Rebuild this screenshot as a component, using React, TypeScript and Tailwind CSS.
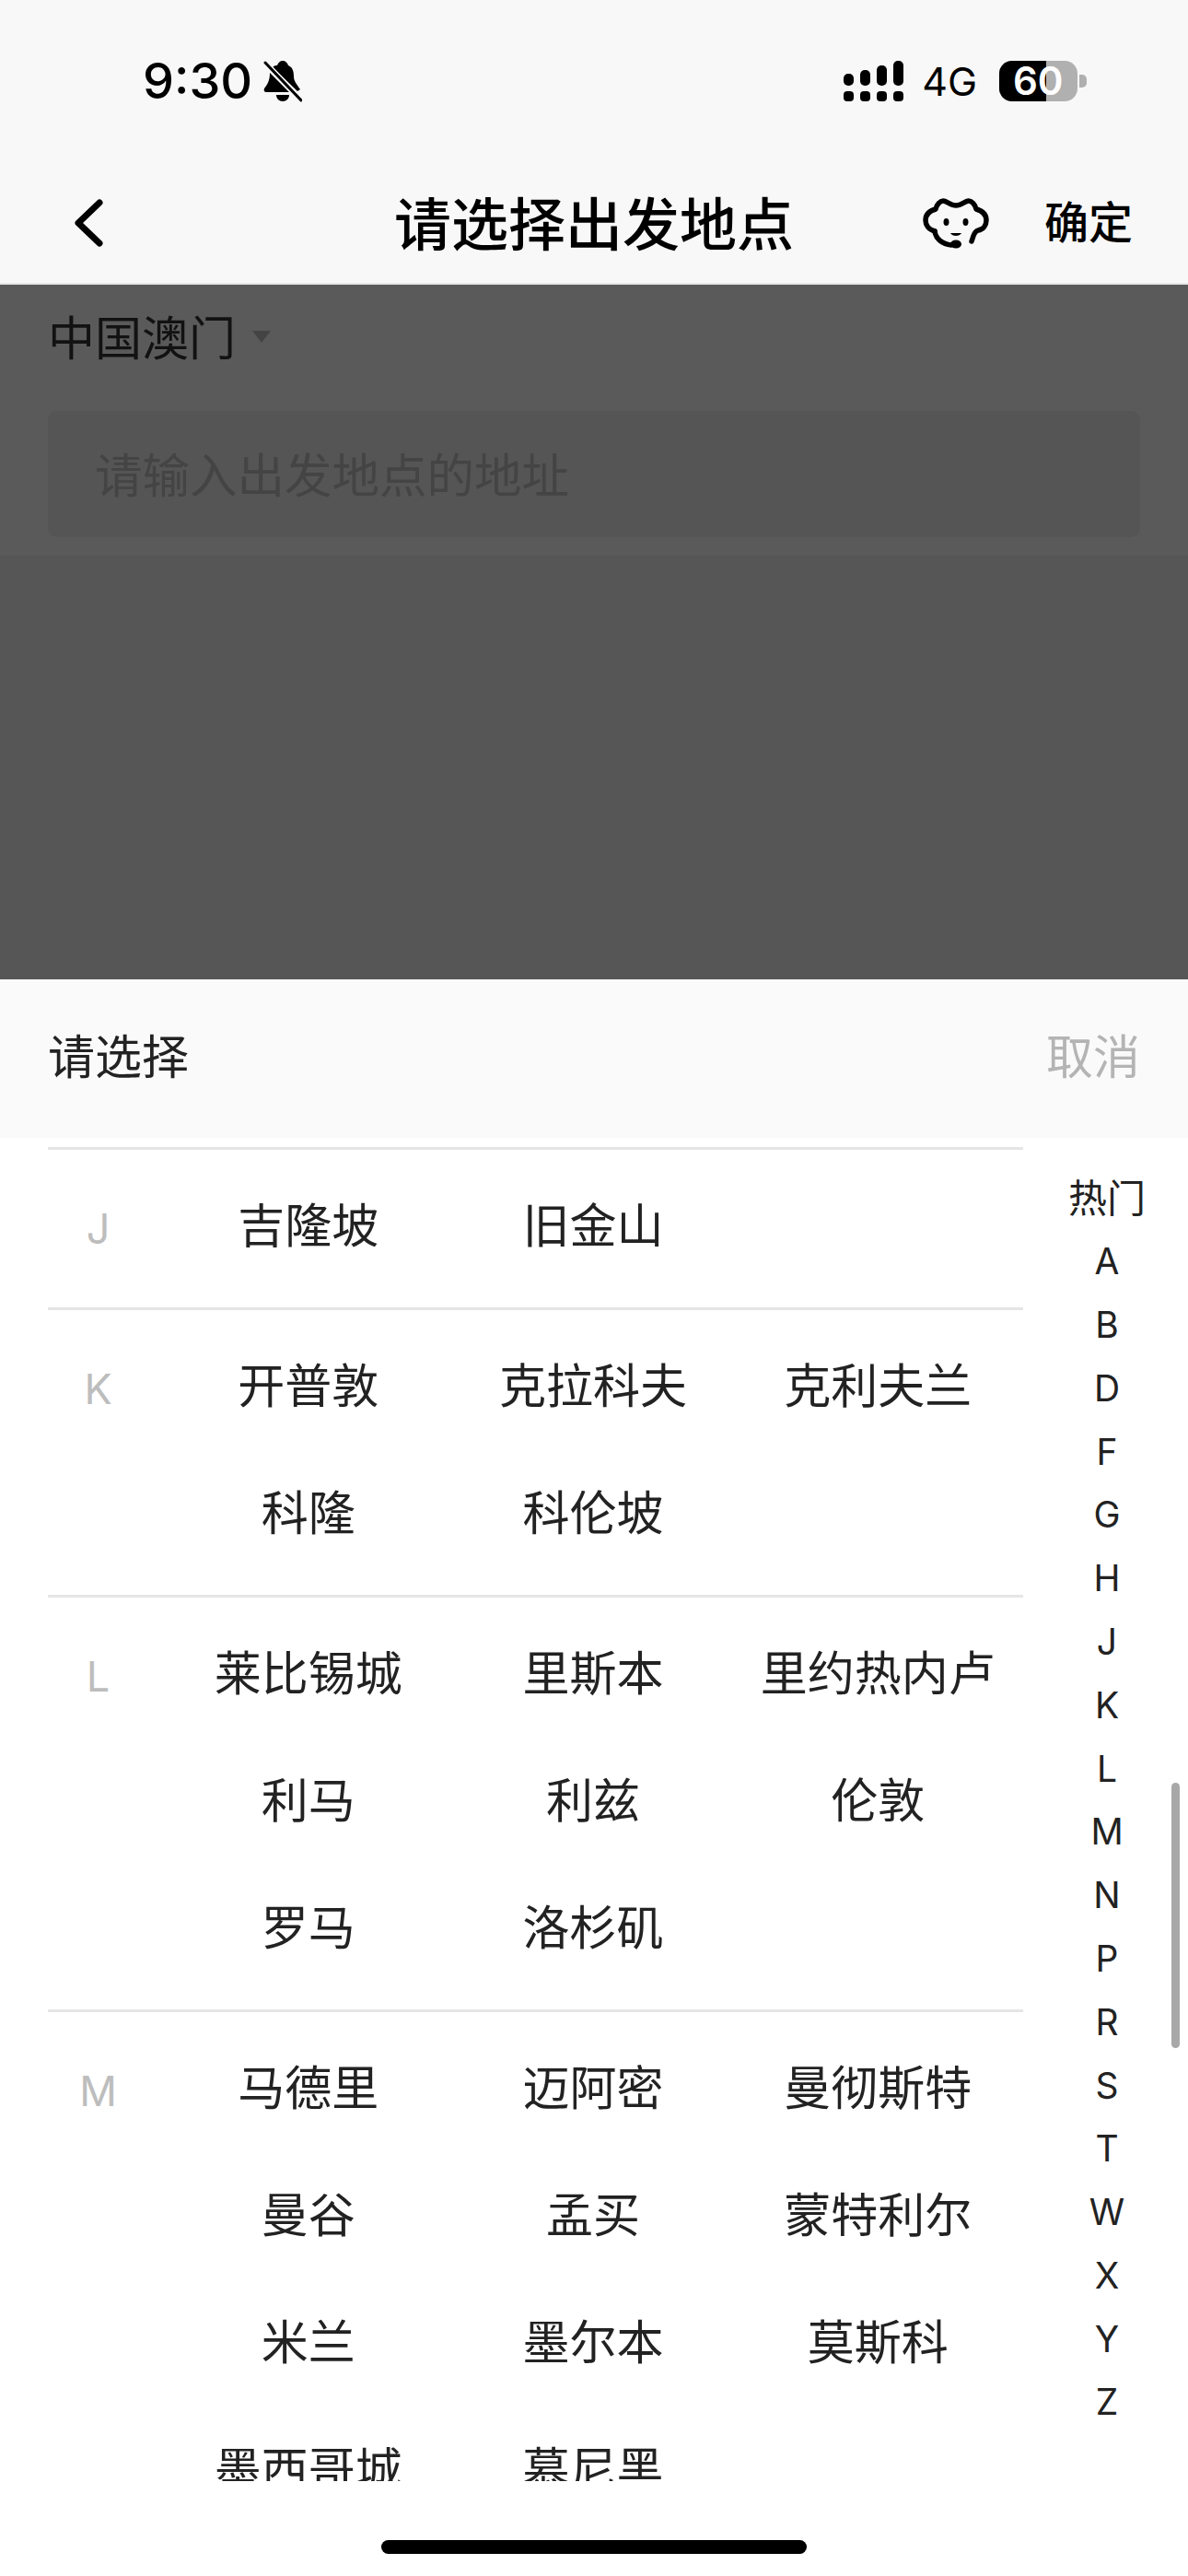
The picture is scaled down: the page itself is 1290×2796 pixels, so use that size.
const cjk = { fontFamily: '"Noto Sans CJK SC", "Noto Sans", sans-serif' };
const latin = { fontFamily: 'Inter, "Noto Sans CJK SC", sans-serif' };

const sections: { letter: string; rows: string[][] }[] = [
  { letter: "J", rows: [["吉隆坡", "旧金山", ""]] },
  { letter: "K", rows: [["开普敦", "克拉科夫", "克利夫兰"], ["科隆", "科伦坡", ""]] },
  { letter: "L", rows: [["莱比锡城", "里斯本", "里约热内卢"], ["利马", "利兹", "伦敦"], ["罗马", "洛杉矶", ""]] },
  { letter: "M", rows: [["马德里", "迈阿密", "曼彻斯特"], ["曼谷", "孟买", "蒙特利尔"], ["米兰", "墨尔本", "莫斯科"], ["墨西哥城", "慕尼黑", ""]] },
];
const index = ["A", "B", "D", "F", "G", "H", "J", "K", "L", "M", "N", "P", "R", "S", "T", "W", "X", "Y", "Z"];

function Bell() {
  return (
    <svg width="42" height="46" viewBox="0 0 42 46" className="ml-[12px]">
      <path d="M21 1c3 0 5 2 6 5 5 2 6 7 6 12 0 5 3 8 7 14l-3 2L10 8c2-2 4-2 5-2 1-3 3-5 6-5Z" fill="#000" />
      <path d="M7 14l21 21H3c-2 0-3-2-2-4 3-4 6-8 6-17Z" fill="#000" />
      <path d="M14 38h14c0 4-3 7-7 7s-7-3-7-7Z" fill="#000" />
      <path d="M2 3l39 41" stroke="#f8f8f8" strokeWidth="6" fill="none" />
      <path d="M2 3l39 41" stroke="#000" strokeWidth="3" strokeLinecap="round" fill="none" />
    </svg>
  );
}

function Signal() {
  const tops = ["h-[13px]", "h-[17px]", "h-[22px]", "h-[27px]"];
  return (
    <div className="flex gap-[7px] h-[44px] items-end">
      {tops.map((t) => (
        <div key={t} className="flex flex-col w-[11px] gap-[6px]">
          <div className={`${t} w-[11px] bg-black rounded-[5px]`} />
          <div className="h-[11px] w-[11px] bg-black rounded-[4px]" />
        </div>
      ))}
    </div>
  );
}

function Battery() {
  return (
    <div className="flex items-center ml-[23px]">
      <div className="relative flex w-[85px] h-[44px] rounded-[14px] bg-[#b0b0b0]">
        <div className="w-[51px] h-full bg-black rounded-l-[14px]" />
        <span className="absolute left-[15px] top-[-4px] leading-[52px] text-[42px] font-semibold text-white" style={latin}>60</span>
      </div>
      <div className="w-[8px] h-[14px] ml-[2px] bg-[#b0b0b0] rounded-r-[5px]" />
    </div>
  );
}

function Dog() {
  return (
    <svg width="72" height="56" viewBox="0 0 72 56" fill="none">
      <path
        d="M13 36C6 34 3 29 3 24c0-6 4-10 11-12 1-5 5-9 8-9 4 0 8 5 14 5s10-5 14-5c3 0 7 4 8 9 7 2 11 6 11 12 0 5-3 10-9 11-3 1-4 3-5 6l-2 6"
        stroke="#000"
        strokeWidth="5.5"
        strokeLinecap="round"
        strokeLinejoin="round"
      />
      <path d="M13 36c1 8 8 14 18 15" stroke="#000" strokeWidth="5.5" strokeLinecap="round" />
      <ellipse cx="36" cy="50" rx="6" ry="4.5" fill="#000" />
      <ellipse cx="25.5" cy="26" rx="3" ry="4" fill="#000" />
      <ellipse cx="46.5" cy="26" rx="3" ry="4" fill="#000" />
      <path d="M30 38c2 4 10 4 12 0Z" fill="#000" />
    </svg>
  );
}

export default function App() {
  return (
    <div className="relative flex flex-col w-[1290px] h-[2796px] overflow-hidden bg-white" style={cjk}>
      <header className="bg-[#f8f8f8] h-[309px] border-b-2 border-[#e6e6e6] shrink-0">
        <div className="flex items-center h-[172px] pl-[155px] pr-[110px] pt-[3px]">
          <div className="flex items-center">
            <span className="text-[54px] leading-[64px] font-medium text-black" style={latin}>9:30</span>
            <Bell />
          </div>
          <div className="flex items-center ml-auto">
            <Signal />
            <span className="ml-[20px] mr-[1px] text-[43px] leading-[44px] text-black" style={latin}>4G</span>
            <Battery />
          </div>
        </div>
        <div className="relative flex items-center justify-center h-[135px]">
          <svg width="36" height="54" viewBox="0 0 36 54" fill="none" className="absolute left-[78px] top-[43px]">
            <path d="M30 5 7 27l23 22" stroke="#000" strokeWidth="7" strokeLinecap="round" strokeLinejoin="round" />
          </svg>
          <h1 className="text-[62px] leading-[70px] font-medium text-black">请选择出发地点</h1>
          <div className="absolute left-[1002px] top-[43px]"><Dog /></div>
          <span className="absolute left-[1134px] top-[38px] text-[48px] leading-[56px] font-medium text-black">确定</span>
        </div>
      </header>

      <main className="h-[754px] shrink-0 flex flex-col bg-[#565656]">
        <div className="h-[294px] bg-[#5a5a5a] pl-[52px] pr-[52px]">
          <div className="flex items-center h-[56px] mt-[27px]">
            <span className="text-[51px] leading-[60px] text-[#121212]">中国澳门</span>
            <span className="ml-[18px] mt-[3px] w-0 h-0 border-x-[10px] border-x-transparent border-t-[13px] border-t-[#444444]" />
          </div>
          <div className="mt-[54px] h-[137px] rounded-[10px] bg-[#555555] flex items-center pl-[51px] pb-[3px] text-[51.5px] text-[#444444]">
            请输入出发地点的地址
          </div>
        </div>
      </main>

      <div className="flex items-center justify-between h-[172px] bg-[#fafafa] px-[52px] pb-[9px] shrink-0 text-[51px]">
        <span className="text-[#222222]">请选择</span>
        <span className="text-[#b4b4b4]">取消</span>
      </div>

      <div className="relative flex h-[1458px] overflow-hidden shrink-0 pt-[10px]">
        <div className="w-[1059px] ml-[52px] shrink-0">
          {sections.map((s) => (
            <section key={s.letter} className="flex border-t-[3px] border-[#e5e5e5] pt-[17px] pb-[16px]">
              <div className="w-[108px] h-[138px] shrink-0 flex items-center justify-center pl-[1px] text-[45px] text-[#bdbdbd]" style={latin}>
                {s.letter}
              </div>
              <div className="grid grid-cols-3 w-[928px] ml-[20px]">
                {s.rows.flat().map((c, i) => (
                  <div key={i} className="h-[138px] flex items-center justify-center pb-[14px] text-[51px] text-[#222222]">{c}</div>
                ))}
              </div>
            </section>
          ))}
        </div>
        <nav className="flex-1 flex flex-col items-center pt-[20px] pl-[3px]">
          <div className="h-[70px] flex items-center pb-[5px] text-[42px] text-[#222222]">热门</div>
          {index.map((l) => (
            <div key={l} className="h-[68.8px] flex items-center text-[39px] text-[#222222]" style={latin}>{l}</div>
          ))}
        </nav>
        <div className="absolute left-[1272px] top-[700px] w-[9px] h-[288px] rounded-[5px] bg-[#a8a8a8]" />
      </div>

      <div className="flex-1 flex justify-center bg-white pt-[64px]">
        <div className="w-[462px] h-[15px] rounded-full bg-black" />
      </div>
    </div>
  );
}
